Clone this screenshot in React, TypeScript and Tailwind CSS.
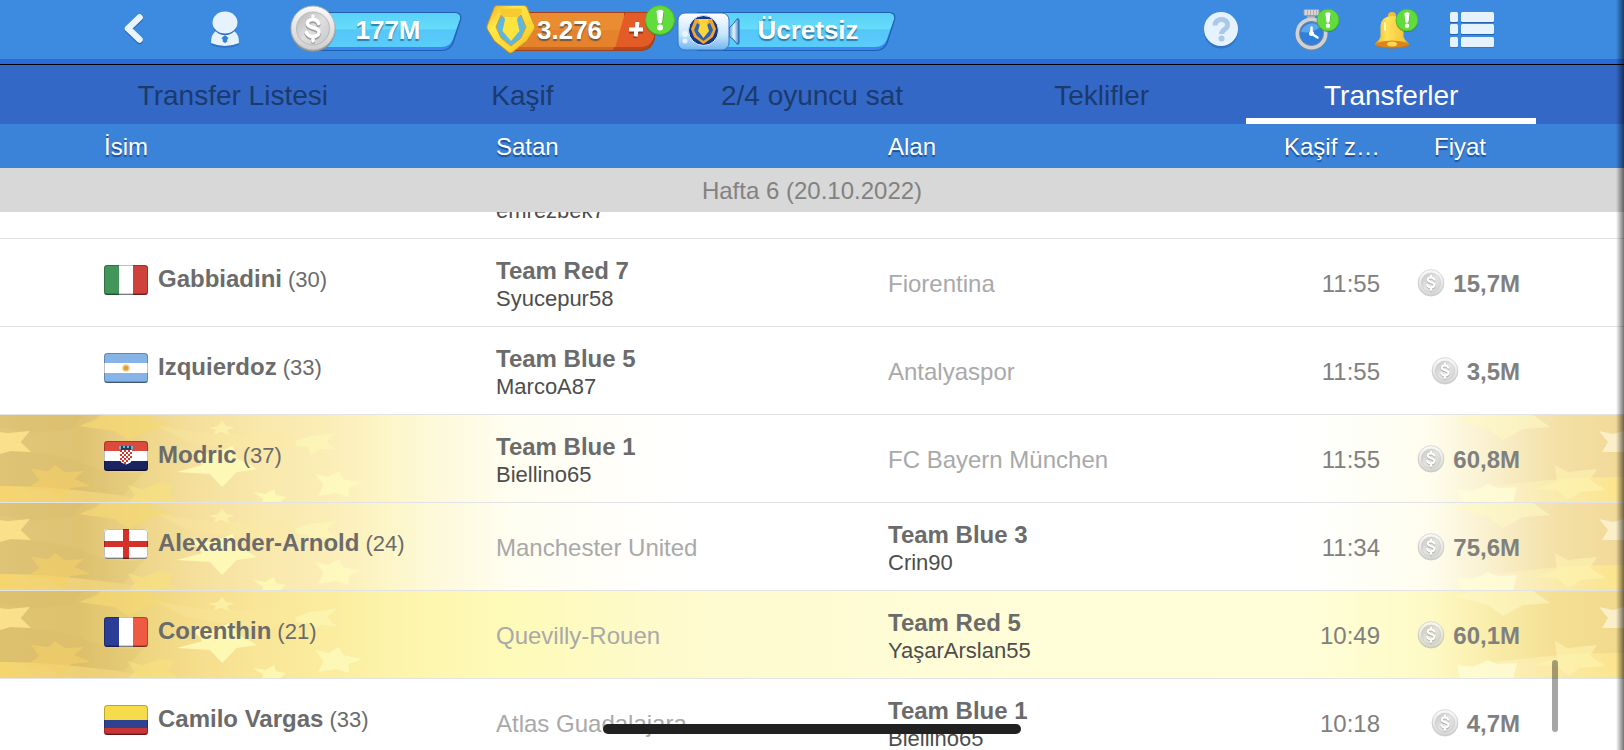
import { useLayoutEffect, useRef, useState } from "react";
import type { ReactNode } from "react";
import clsx from "clsx";

type Country = "it" | "ar" | "hr" | "en" | "fr" | "co";

interface Club {
  name: string;
  manager?: string;
}

interface Transfer {
  country: Country;
  player: string;
  age: number;
  seller: Club;
  buyer: Club;
  time: string;
  price: string;
  highlight?: "gold" | "yellow";
}

const tabs = ["Transfer Listesi", "Kaşif", "2/4 oyuncu sat", "Teklifler", "Transferler"];

const transfers: Transfer[] = [
  { country: "it", player: "Bonucci", age: 35, seller: { name: "Team Red 2", manager: "emrezbek7" }, buyer: { name: "" }, time: "11:56", price: "9,2M" },
  { country: "it", player: "Gabbiadini", age: 30, seller: { name: "Team Red 7", manager: "Syucepur58" }, buyer: { name: "Fiorentina" }, time: "11:55", price: "15,7M" },
  { country: "ar", player: "Izquierdoz", age: 33, seller: { name: "Team Blue 5", manager: "MarcoA87" }, buyer: { name: "Antalyaspor" }, time: "11:55", price: "3,5M" },
  { country: "hr", player: "Modric", age: 37, seller: { name: "Team Blue 1", manager: "Biellino65" }, buyer: { name: "FC Bayern München" }, time: "11:55", price: "60,8M", highlight: "gold" },
  { country: "en", player: "Alexander-Arnold", age: 24, seller: { name: "Manchester United" }, buyer: { name: "Team Blue 3", manager: "Crin90" }, time: "11:34", price: "75,6M", highlight: "gold" },
  { country: "fr", player: "Corenthin", age: 21, seller: { name: "Quevilly-Rouen" }, buyer: { name: "Team Red 5", manager: "YaşarArslan55" }, time: "10:49", price: "60,1M", highlight: "yellow" },
  { country: "co", player: "Camilo Vargas", age: 33, seller: { name: "Atlas Guadalajara" }, buyer: { name: "Team Blue 1", manager: "Biellino65" }, time: "10:18", price: "4,7M" },
];

const flagArt: Record<Country, ReactNode> = {
  it: (
    <>
      <path fill="#43965a" d="M0 0h15v30H0z" />
      <path fill="#fff" d="M15 0h14v30H15z" />
      <path fill="#cf423c" d="M29 0h15v30H29z" />
    </>
  ),
  ar: (
    <>
      <path fill="#86b4e6" d="M0 0h44v30H0z" />
      <path fill="#fff" d="M0 10h44v10H0z" />
      <circle cx="22" cy="15" r="4" fill="#f6dca4" />
      <circle cx="22" cy="15" r="2.6" fill="#e0a038" />
    </>
  ),
  hr: (
    <>
      <path fill="#dc4a3e" d="M0 0h44v10H0z" />
      <path fill="#fff" d="M0 10h44v10H0z" />
      <path fill="#1b2360" d="M0 20h44v10H0z" />
      <path fill="#fff" d="M16 9h12v9q0 4-6 5.500-6-1.500-6-5.500z" />
      <path fill="#d8352b" d="M16 9h2v2h-2zM20 9h2v2h-2zM24 9h2v2h-2zM18 11h2v2h-2zM22 11h2v2h-2zM26 11h2v2h-2zM16 13h2v2h-2zM20 13h2v2h-2zM24 13h2v2h-2zM18 15h2v2h-2zM22 15h2v2h-2zM26 15h2v2h-2zM16 17h2v2h-2zM20 17h2v2h-2zM24 17h2v2h-2zM18 19h2v2h-2zM22 19h2v2h-2zM20 21h2v2h-2z" />
      <path fill="#24405f" d="M17 5h10v4H17z" />
      <path fill="#6cb9d6" d="M15 5h2v3h-2zM19 5h2v2h-2zM23 5h2v2h-2zM27 5h2v3h-2z" />
    </>
  ),
  en: (
    <>
      <path fill="#fff" d="M0 0h44v30H0z" />
      <path fill="#d4312a" d="M19 0h6v30h-6z" />
      <path fill="#d4312a" d="M0 12h44v6H0z" />
    </>
  ),
  fr: (
    <>
      <path fill="#2b3d96" d="M0 0h15v30H0z" />
      <path fill="#fff" d="M15 0h14v30H15z" />
      <path fill="#ee5a42" d="M29 0h15v30H29z" />
    </>
  ),
  co: (
    <>
      <path fill="#f6dc4a" d="M0 0h44v15H0z" />
      <path fill="#2f4290" d="M0 15h44v8H0z" />
      <path fill="#c93434" d="M0 23h44v7H0z" />
    </>
  ),
};

const Flag = ({ country }: { country: Country }) => (
  <svg viewBox="0 0 44 30" className="h-[30px] w-11 shrink-0 overflow-hidden rounded-[3px]" aria-hidden="true">
    {flagArt[country]}
    <path fill="#000" fillOpacity="0.350" d="M0 28.500h44V30H0z" />
    <rect x="0.500" y="0.500" width="43" height="29" rx="3" fill="none" stroke="#000" strokeOpacity="0.250" />
  </svg>
);

const Coin = ({ className, faded }: { className: string; faded?: boolean }) => (
  <svg viewBox="0 0 46 48" className={className} aria-hidden="true">
    <defs>
      <linearGradient id="coin-rim" x1="0" y1="0" x2="0" y2="1">
        <stop offset="0" stopColor="#fafafa" />
        <stop offset="1" stopColor="#cfcfcf" />
      </linearGradient>
      <linearGradient id="coin-face" x1="0" y1="0" x2="1" y2="1">
        <stop offset="0" stopColor="#b8b8b8" />
        <stop offset="0.500" stopColor="#dedede" />
        <stop offset="1" stopColor="#c8c8c8" />
      </linearGradient>
    </defs>
    <g opacity={faded ? 0.8 : 1}>
      <circle cx="23" cy="24.500" r="22.500" fill="#8b8f96" fillOpacity={faded ? 0.5 : 1} />
      <circle cx="23" cy="23" r="22" fill="url(#coin-rim)" stroke="#b5b5b5" />
      <circle cx="23" cy="23.500" r="16.500" fill="url(#coin-face)" stroke="#b9b9b9" />
      <g fill="none" strokeLinecap="round">
        <path stroke="#9c9c9c" strokeWidth="4" d="M28.500 20c-1-3-3-4-5.500-4-3.500 0-5.500 1.800-5.500 4 0 5.500 11.500 3 11.500 8.500 0 2.800-2.500 4.500-6 4.500-3.500 0-5.500-1.500-6.500-4M23 13v3M23 33v4" />
        <path stroke="#fff" strokeWidth="3.500" d="M28.500 18.500c-1-3-3-4-5.500-4-3.500 0-5.500 1.800-5.500 4 0 5.500 11.500 3 11.500 8.500 0 2.800-2.500 4.500-6 4.500-3.500 0-5.500-1.500-6.500-4M23 11v3M23 32v4" />
      </g>
    </g>
  </svg>
);

const Crest = ({ className }: { className: string }) => (
  <svg viewBox="0 0 50 50" className={className} aria-hidden="true">
    <defs>
      <linearGradient id="crest-gold" x1="0" y1="0" x2="1" y2="1">
        <stop offset="0" stopColor="#f2a922" />
        <stop offset="0.300" stopColor="#ffe94a" />
        <stop offset="0.700" stopColor="#fbd534" />
        <stop offset="1" stopColor="#ee9d1c" />
      </linearGradient>
    </defs>
    <path fill="url(#crest-gold)" stroke="#d08f1c" strokeLinejoin="round" d="M11 1.500h27q2 0 3 2l7.500 18q.8 2-.3 4L41 37 26 48.500q-1.500 1-3 0L8.500 37 1.500 25.500q-1-2-.3-4l7-18q1-2 2.800-2z" />
    <path fill="#5fb6de" stroke="#d99c20" strokeLinejoin="round" d="M15 11l-5 12 5 11 10 8 10-8 5-11-5-12-4 3H19z" />
    <path fill="#fde43f" d="M14 6q0-1.500 2-1.500h18q2 0 2 1.500 0 4-4 7-1.500 2-.5 5l2 9-8.500 10L16.500 27l2-9q1-3-.5-5-4-3-4-7z" />
    <path fill="#f0ab22" fillOpacity="0.450" d="M14 6q0-1.500 2-1.500h18q2 0 2 1.500 0 4-4 7H18q-4-3-4-7z" />
  </svg>
);

const Camera = () => (
  <svg viewBox="0 0 64 42" className="absolute left-0 top-[11px] h-[42px] w-16" aria-hidden="true">
    <defs>
      <linearGradient id="camera-body" x1="0" y1="0" x2="0" y2="1">
        <stop offset="0" stopColor="#fff" />
        <stop offset="0.600" stopColor="#c5e4fb" />
        <stop offset="1" stopColor="#6fb4ef" />
      </linearGradient>
      <linearGradient id="camera-lens" x1="0" y1="0" x2="1" y2="0">
        <stop offset="0" stopColor="#5a9bd8" />
        <stop offset="0.500" stopColor="#e5f6ff" />
        <stop offset="1" stopColor="#3a7cc4" />
      </linearGradient>
    </defs>
    <path fill="url(#camera-lens)" stroke="#2362ae" strokeLinejoin="round" d="M52 17q5-4 8-9 1.500-1 2 1v23q-.5 2-2 1-3-5-8-8z" />
    <rect x="1" y="2" width="51" height="37" rx="7" fill="url(#camera-body)" stroke="#2c76cc" />
    <circle cx="8" cy="23" r="3" fill="#fff" fillOpacity="0.600" />
    <circle cx="8" cy="30" r="2.500" fill="#fff" fillOpacity="0.700" />
    <circle cx="26.500" cy="19.500" r="15" fill="#15398a" stroke="#dcebfa" />
    <path fill="#f5a52c" d="M18 8h17l4 10-3 8-9.500 7-9.500-7-3-8z" />
    <path fill="#2d62b5" d="M20 12l-3 7 3 6 6.500 5 6.500-5 3-6-3-7-3 2h-7z" />
    <path fill="#fcd53b" d="M21 8h11l-2 5 2 7-5.500 7-5.500-7 2-7z" />
  </svg>
);

const AlertBadge = ({ className }: { className: string }) => (
  <svg viewBox="0 0 32 32" className={className} aria-hidden="true">
    <circle cx="16" cy="17" r="15" fill="#2f7d27" fillOpacity="0.600" />
    <circle cx="16" cy="16" r="14.500" fill="#62dc3c" stroke="#4fb934" />
    <path fill="#2c8a22" fillOpacity="0.600" d="M13 8q3.500-2 7 0l-1.500 12h-4z" />
    <path fill="#fff" d="M12.500 7q3.500-2.500 7 0l-1.500 12q-2 1.500-4 0z" />
    <circle cx="16" cy="23.500" r="3" fill="#fff" />
  </svg>
);

// slanted plate the balance sits on
const Plate = () => (
  <svg viewBox="0 0 300 40" preserveAspectRatio="xMaxYMid slice" className="absolute inset-y-3 right-0 left-5 h-10 w-[calc(100%-20px)]" aria-hidden="true">
    <defs>
      <linearGradient id="plate" x1="0" y1="0" x2="0" y2="1">
        <stop offset="0" stopColor="#5cd0f8" />
        <stop offset="0.460" stopColor="#64dcfa" />
        <stop offset="0.500" stopColor="#55c6f8" />
        <stop offset="1" stopColor="#5acdfb" />
      </linearGradient>
    </defs>
    <path fill="#215fae" d="M0 0h292q9 0 7 8l-7 22q-3 9-13 9H0z" />
    <path fill="#3a86f0" d="M0 1h292q7 0 6 6l-7 22q-3 9-12 9H0z" />
    <path fill="url(#plate)" d="M0 1h292q7 0 6 6l-7 20q-3 8-12 8H0z" />
  </svg>
);

const GoldPlate = () => (
  <svg viewBox="0 0 170 40" className="absolute left-0 top-3 h-10 w-[170px]" aria-hidden="true">
    <path fill="#a4401c" d="M20 0h150l-1 27q-3 11-13 12H20z" />
    <path fill="#c96a22" d="M20 1h118v37H20z" />
    <path fill="#ea8c32" d="M20 1h118v34H20z" />
    <path fill="#e5822c" d="M20 18h118v17H20z" />
    <path fill="#e35c28" d="M139 1h30l-1 24q-3 10-12 11h-27z" />
    <path fill="#b5471c" d="M128 35h28q9-1 12-9-3 11-13 12h-28z" />
  </svg>
);

const balanceText = "relative text-[26px] leading-8 font-bold text-white [text-shadow:0_2px_1px_rgba(0,50,90,0.5)]";

const TopBar = () => (
  <header className="flex h-16 shrink-0 items-stretch border-b-[5px] border-[#2b6adb] bg-[#3c8be0] pr-[130px] pl-[114px]">
    <button type="button" aria-label="Geri" className="flex w-10 items-center justify-center">
      <svg viewBox="0 0 24 34" className="h-[34px] w-6" fill="none" strokeLinecap="round" strokeLinejoin="round">
        <path stroke="#2a68b4" strokeWidth="6.500" d="M17.500 6 6 17l11.500 11" />
        <path stroke="#e8f4fe" strokeWidth="6.500" d="M17.500 4.500 6 15.500l11.500 11" />
      </svg>
    </button>
    <button type="button" aria-label="Profil" className="ml-[51px] flex w-10 items-center justify-center">
      <svg viewBox="0 0 30 38" className="h-[38px] w-[30px]">
        <path fill="#2f74c4" d="M1 34q0-10 7-12h14q7 2 7 12-14 6-28 0z" />
        <path fill="#e6f3fe" d="M1 32q0-9 5-12l5 3q4 2 8 0l5-3q5 3 5 12-14 6-28 0z" />
        <ellipse cx="15" cy="12.500" rx="12.500" ry="11.500" fill="#2f74c4" />
        <ellipse cx="15" cy="11.500" rx="12.500" ry="11" fill="#e6f3fe" />
        <path fill="#3580d2" d="m15 24 3.500 3-1.500 2 .5 1.500L15 32l-2.500-1.500.5-1.500-1.500-2z" />
      </svg>
    </button>
    <button type="button" className="relative ml-[45px] flex w-[172px] items-center justify-center pl-6">
      <Plate />
      <Coin className="absolute left-0 top-[5px] h-12 w-[46px]" />
      <span className={balanceText}>177M</span>
    </button>
    <button type="button" className="relative ml-6 flex w-[170px] items-center pl-[51px]">
      <GoldPlate />
      <Crest className="absolute left-0 top-1 h-[50px] w-[50px]" />
      <span className={balanceText}>3.276</span>
      <svg viewBox="0 0 16 16" className="relative ml-[26px] h-4 w-4" fill="none" strokeWidth="4" aria-hidden="true">
        <path stroke="#8f3517" d="M9 2 7 16M1 9.500h14" />
        <path stroke="#fff" d="M9.500 0 7.500 14.500M1 7.500h14" />
      </svg>
      <AlertBadge className="absolute -right-5 top-1 z-10 h-8 w-8" />
    </button>
    <button type="button" className="relative ml-[21px] flex w-[219px] items-center justify-center pl-[43px]">
      <Plate />
      <Camera />
      <span className={balanceText}>Ücretsiz</span>
    </button>
    <button type="button" aria-label="Yardım" className="ml-auto flex w-9 items-center justify-center">
      <svg viewBox="0 0 36 38" className="h-[38px] w-9">
        <circle cx="18" cy="20.500" r="17" fill="#2f74c4" />
        <circle cx="18" cy="18" r="17" fill="#e6f3fe" />
        <path fill="none" stroke="#a9c9e6" strokeWidth="5" d="M12 14.500c0-4 3-6 6.500-6s6 2 6 5.500c0 4.500-6 4.500-6 9" />
        <circle cx="18.500" cy="27.500" r="3" fill="#a9c9e6" />
      </svg>
    </button>
    <button type="button" aria-label="Antrenman" className="relative ml-14 flex w-[45px] items-center">
      <svg viewBox="0 0 34 44" className="h-11 w-[34px]">
        <path fill="#a9a9a9" d="M12 7h8v5h-8z" />
        <rect x="9" y="1.500" width="15" height="6" rx="1" fill="#d6d6d6" stroke="#9d9d9d" />
        <path stroke="#b0b0b0" d="M12.500 2v5M15.500 2v5M18.500 2v5M21.500 2v5" />
        <circle cx="16.500" cy="26.500" r="16" fill="#7d828a" />
        <circle cx="16.500" cy="25.500" r="16" fill="#cfd1d4" />
        <circle cx="16.500" cy="25.500" r="12" fill="#2f7fdc" stroke="#7b8794" />
        <path fill="#7dc0fa" fillOpacity="0.600" d="M6 24a11 11 0 0 1 19-5q-7 7-19 5z" />
        <circle cx="16.500" cy="25.500" r="2.500" fill="#fff" />
        <path stroke="#fff" strokeWidth="2.500" strokeLinecap="round" d="M16.500 25v-5.500M17 26l5.500 3.500" />
      </svg>
      <AlertBadge className="absolute right-0 top-2 h-6 w-6" />
    </button>
    <button type="button" aria-label="Bildirimler" className="relative ml-[34px] flex w-[45px] items-center">
      <svg viewBox="0 0 36 38" className="h-[38px] w-9">
        <defs>
          <linearGradient id="bell" x1="0" y1="0" x2="1" y2="0">
            <stop offset="0" stopColor="#efb52c" />
            <stop offset="0.350" stopColor="#ffe35a" />
            <stop offset="1" stopColor="#f4bd30" />
          </linearGradient>
        </defs>
        <path fill="#c5731b" d="M1 33q17 6 34 0v2q-17 5-34 0z" />
        <circle cx="18" cy="5" r="4" fill="#f1bf37" />
        <path fill="url(#bell)" d="M6.500 26V15Q7 5.500 18 5t11.500 10v11q1 3 5 6.500-16.500 5-33 0 4-3.500 5-6.500z" />
        <path fill="#d9861c" d="M1 32q17-5 34 0v2q-17 5-34 0z" />
        <ellipse cx="18" cy="33" rx="5" ry="2.500" fill="#ffd552" />
        <path stroke="#fff6b8" strokeWidth="2" strokeLinecap="round" d="M11 12v7" />
      </svg>
      <AlertBadge className="absolute right-0 top-2 h-6 w-6" />
    </button>
    <button type="button" aria-label="Menü" className="ml-[31px] flex w-11 items-center">
      <svg viewBox="0 0 44 38" className="h-[38px] w-11">
        <g fill="#2463b3">
          <path d="M0 4h8v8H0zM11 4h33v8H11zM0 16h8v8H0zM11 16h33v8H11z" />
          <path fillOpacity="0.500" d="M0 29h8v8H0zM11 29h33v8H11z" />
        </g>
        <g fill="#e6f3fe">
          <rect y="1" width="8" height="10" rx="1.500" />
          <rect x="11" y="1" width="33" height="10" rx="1.500" />
          <rect y="13" width="8" height="10" rx="1.500" />
          <rect x="11" y="13" width="33" height="10" rx="1.500" />
          <rect y="26" width="8" height="10" rx="1.500" />
          <rect x="11" y="26" width="33" height="10" rx="1.500" />
        </g>
      </svg>
    </button>
  </header>
);

const StarArt = () => (
  <>
    <svg viewBox="0 0 387 88" preserveAspectRatio="none" className="absolute left-0 top-0 -z-10 h-[88px] w-[400px]" aria-hidden="true">
      <defs>
        <linearGradient id="swoosh" x1="0" y1="0" x2="1" y2="0">
          <stop offset="0" stopColor="#f6d56e" />
          <stop offset="1" stopColor="#f8df8c" stopOpacity="0.200" />
        </linearGradient>
      </defs>
      <path fill="#d3b866" fillOpacity="0.180" d="M0 38q50-4 90 14 30 10 50 4l-20 24-120-10z" />
      <path fill="#d3b866" fillOpacity="0.180" d="M0 0h80l-10 14-40 4-30-6z" />
      <path fill="url(#swoosh)" d="M0 71q70 0 160 17H0z" />
      <path fill="#fbe08c" d="M0 17q4 1 8 1l21-2-9 11 10 10-20-1-10 3z" />
      <path fill="#f5d874" fillOpacity="0.700" d="m76 11 16-6 6-5h50l-2 6 20 3-23 7-18 9-15-9z" />
      <path fill="#f3d068" fillOpacity="0.600" d="m30 54 17 2 6-6 10 7 18-1-9 8 16 7-20 2-8 13-13-11-22 0 13-10z" />
      <path fill="#f9e37e" fillOpacity="0.600" d="m123 70 15 4 17-6 13 2-5 10 10 8h-49l6-8z" />
      <path fill="#fbeaa0" fillOpacity="0.300" d="M150 10q60 14 120 6l30 14q-60 10-120-4z" />
      <path fill="#fdf5ac" fillOpacity="0.700" d="m202 13 9-2 4-5 4 5 8 1-7 3 2 5-8-3-7 2 2-4z" />
      <path fill="#fefcb8" fillOpacity="0.850" d="m171 57 25-7-11-13 21 2 19-8 4 12 20 11-20 3-14 15-12-13z" />
      <path fill="#fefab8" fillOpacity="0.600" d="m286 26 14-5 26-3-10 8 9 9-15-1-9 7-3-9-12-1z" />
      <path fill="#fefcc0" fillOpacity="0.700" d="m305 59 13 3 10-6 4 8 18 4-13 5 1 9-13-4-17 3 5-11z" />
      <path fill="#fefbb4" fillOpacity="0.800" d="m245 77 12 2 8-5 2 6 10 2-7 6h-18l3-4z" />
    </svg>
    <svg viewBox="0 0 200 88" className="absolute right-0 top-0 -z-10 h-[88px] w-[200px]" aria-hidden="true">
      <defs>
        <linearGradient id="swoosh-end" x1="0" y1="0" x2="1" y2="0">
          <stop offset="0" stopColor="#fffce0" stopOpacity="0.300" />
          <stop offset="1" stopColor="#fce489" />
        </linearGradient>
      </defs>
      <path fill="url(#swoosh-end)" d="M40 76q80-14 160-14v26H40z" />
      <path fill="#faefc8" d="m175 16 14 3 11-3v21h-22l6-10z" />
      <path fill="#fef8c4" fillOpacity="0.600" d="m29 5 20-5h60l17 12-27 2-20 11-15-11z" />
      <path fill="#fef5b0" fillOpacity="0.600" d="m131 50 13 7 29-3-7 11 16 10-26 2-12 8-11-10-24-1 24-7z" />
      <path fill="#fffdd8" fillOpacity="0.700" d="m33 74 16 2 15-7 9 4 20-1-4 16H36z" />
    </svg>
  </>
);

const ClubCell = ({ club }: { club: Club }) =>
  club.manager ? (
    <div className="pt-1 text-[#4d4d4d]">
      <div className="text-2xl leading-7 font-bold text-[#6b6b6b]">{club.name}</div>
      <div className="text-[22px] leading-7">{club.manager}</div>
    </div>
  ) : (
    <div className="pt-[2px] text-2xl leading-7 text-[#a9a9a9]">{club.name}</div>
  );

const TransferRow = ({ item }: { item: Transfer }) => (
  <tr
    className={clsx(
      "relative isolate h-[88px] [&>td]:border-b [&>td]:border-[#e2e3e6] [&>td]:p-0",
      item.highlight === "gold" &&
        "bg-[linear-gradient(90deg,#e2c67a_0%,#dfc373_5%,#eed68a_9%,#f5df9c_12%,#f9e8ab_16%,#fbedb6_20%,#fdf6c8_24%,#fefae0_28%,#fffef2_32%,#ffffff_42%,#ffffff_80%,#fefdee_88%,#f9efcb_92%,#f4e0a6_96%,#f1d997_100%)]",
      item.highlight === "yellow" &&
        "bg-[linear-gradient(90deg,#e0c472_0%,#dfc26c_5%,#eed580_9%,#f5dd8c_12%,#f9e698_16%,#fbec9e_20%,#fdf5ac_25%,#fefab8_31%,#feface_42%,#fffdd8_60%,#fffed8_80%,#fefac6_88%,#f9eca8_92%,#f4df93_96%,#f1d98c_100%)]",
    )}
  >
    <td>
      {item.highlight && <StarArt />}
      <div className="flex items-center gap-[10px] pb-[6px] pl-[104px]">
        <Flag country={item.country} />
        <div className="flex items-baseline gap-[6px] leading-7 whitespace-nowrap text-[#6b6b6b]">
          <span className="text-2xl leading-7 font-bold">{item.player}</span>
          <span className="text-[22px] leading-7">({item.age})</span>
        </div>
      </div>
    </td>
    <td>
      <ClubCell club={item.seller} />
    </td>
    <td>
      <ClubCell club={item.buyer} />
    </td>
    <td className="text-right text-2xl leading-7 text-[#808080]">
      <div className="pt-[2px]">{item.time}</div>
    </td>
    <td>
      <div className="flex items-center justify-end gap-2 pr-[104px] text-2xl leading-7 font-bold text-[#808080]">
        <Coin faded className="h-7 w-7" />
        <span className="pt-[2px]">{item.price}</span>
      </div>
    </td>
  </tr>
);

const App = () => {
  const [activeTab, setActiveTab] = useState("Transferler");
  const listRef = useRef<HTMLDivElement>(null);

  useLayoutEffect(() => {
    if (listRef.current) listRef.current.scrollTop = 61;
  }, []);

  return (
    <div className="relative flex h-screen flex-col overflow-hidden bg-white font-['Liberation_Sans',Arial,sans-serif]">
      <TopBar />

      {/* Tabs */}
      <nav className="grid h-[60px] shrink-0 grid-cols-5 border-t border-black bg-[#3468c6] px-[88px]">
        {tabs.map((tab) => (
          <button
            key={tab}
            type="button"
            onClick={() => setActiveTab(tab)}
            className={clsx(
              "border-b-[6px] pt-2 text-[28px] leading-8 whitespace-nowrap",
              tab === activeTab ? "border-white text-white" : "border-transparent text-[#1b3a6e]",
            )}
          >
            {tab}
          </button>
        ))}
      </nav>

      {/* Transfer list */}
      <main ref={listRef} className="min-h-0 flex-1 overflow-y-auto [scrollbar-width:none]">
        <table className="w-full table-fixed border-separate border-spacing-0">
          <colgroup>
            <col className="w-[496px]" />
            <col />
            <col />
            <col className="w-[100px]" />
            <col className="w-[244px]" />
          </colgroup>
          <thead className="sticky top-0 z-10">
            <tr className="h-11 bg-[#3b82d9] text-left text-2xl leading-7 text-white [text-shadow:0_2px_1px_rgba(0,30,80,0.5)] [&>th]:p-0 [&>th]:pt-[2px] [&>th]:font-normal">
              <th scope="col">
                <div className="pl-[104px]">İsim</div>
              </th>
              <th scope="col">Satan</th>
              <th scope="col">Alan</th>
              <th scope="col" className="text-right whitespace-nowrap">
                Kaşif z…
              </th>
              <th scope="col">
                <div className="pr-[104px] pl-5 text-center">Fiyat</div>
              </th>
            </tr>
            <tr className="h-11 bg-[#d8d8d8] text-2xl leading-7 text-[#828282]">
              <th colSpan={5} className="p-0 pt-[2px] text-center font-normal">
                Hafta 6 (20.10.2022)
              </th>
            </tr>
          </thead>
          <tbody>
            {transfers.map((item) => (
              <TransferRow key={item.player} item={item} />
            ))}
          </tbody>
        </table>
      </main>

      {/* Scroll thumb, home indicator and edge shade float above the list */}
      <div className="absolute right-[66px] bottom-[18px] z-20 h-[72px] w-[6px] rounded-full bg-black/35" />
      <div className="absolute bottom-4 left-1/2 z-20 h-[10px] w-[418px] -translate-x-1/2 rounded-full bg-[#212121]" />
      <div className="pointer-events-none absolute inset-y-0 right-0 z-20 w-2 bg-linear-to-r from-transparent to-black/55" />
    </div>
  );
};

export default App;
